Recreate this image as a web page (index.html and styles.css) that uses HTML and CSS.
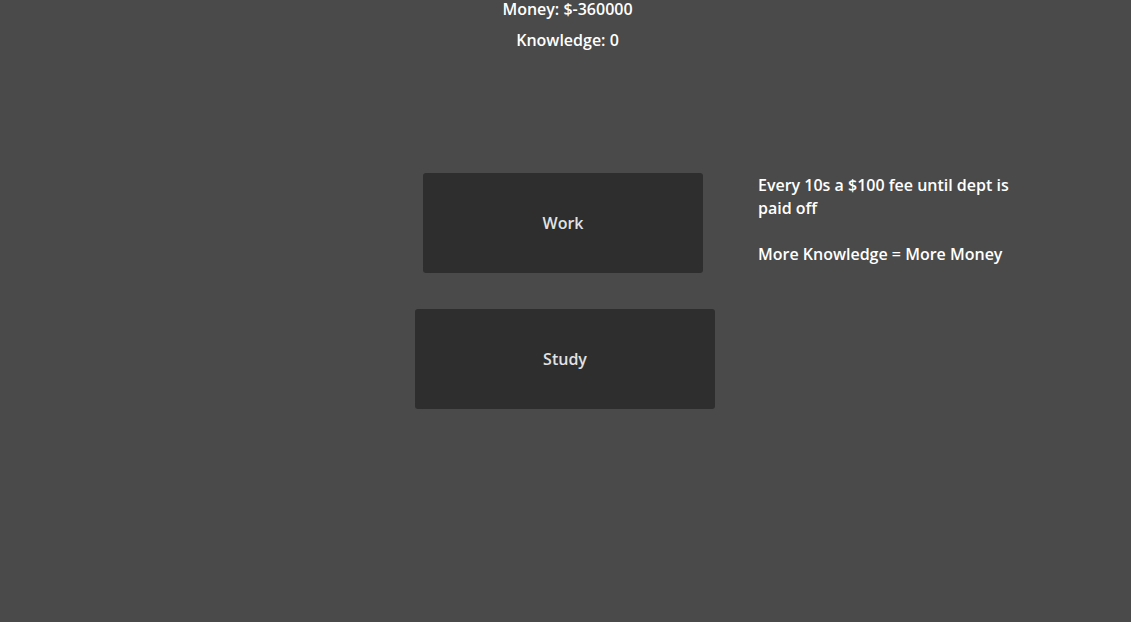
FILE: index.html
```html
<!DOCTYPE html>
<html>
<head>
<meta charset="utf-8">
<link rel="stylesheet" href="styles.css">
</head>
<body>
<div class="stats">
  <div class="stat">Money: $-360000</div>
  <div class="stat">Knowledge: 0</div>
</div>
<div class="main">
  <div class="spacer"></div>
  <div class="actions">
    <button class="btn btn-work">Work</button>
    <button class="btn btn-study">Study</button>
  </div>
  <div class="info">
    <p>Every 10s a $100 fee until dept is paid off</p>
    <p>More Knowledge = More Money</p>
  </div>
</div>
</body>
</html>
```
FILE: styles.css
```css
html, body {
  margin: 0;
  padding: 0;
  background: #4a4a4a;
  height: 100%;
}
body {
  font-family: "Open Sans", "DejaVu Sans", sans-serif;
  font-weight: 600;
  font-size: 16px;
  color: #ffffff;
}
.stats {
  display: flex;
  flex-direction: column;
  align-items: center;
  gap: 13px;
  padding-left: 4px;
}
.stat {
  line-height: 18px;
}
.main {
  display: grid;
  grid-template-columns: 1fr 300px 1fr;
  align-items: start;
  margin-top: 124px;
  padding-right: 1px;
}
.actions {
  display: flex;
  flex-direction: column;
  gap: 36px;
}
.btn {
  font-family: inherit;
  font-weight: 600;
  font-size: 16px;
  color: #e2e2e2;
  background: #2e2e2e;
  border: none;
  border-radius: 3px;
  height: 100px;
  padding: 0;
  cursor: pointer;
}
.btn-work {
  width: 280px;
  margin-left: 8px;
}
.btn-study {
  width: 300px;
}
.info {
  padding-left: 43px;
  padding-top: 1px;
  width: 265px;
  line-height: 23px;
}
.info p {
  margin: 0 0 23px 0;
}
```
